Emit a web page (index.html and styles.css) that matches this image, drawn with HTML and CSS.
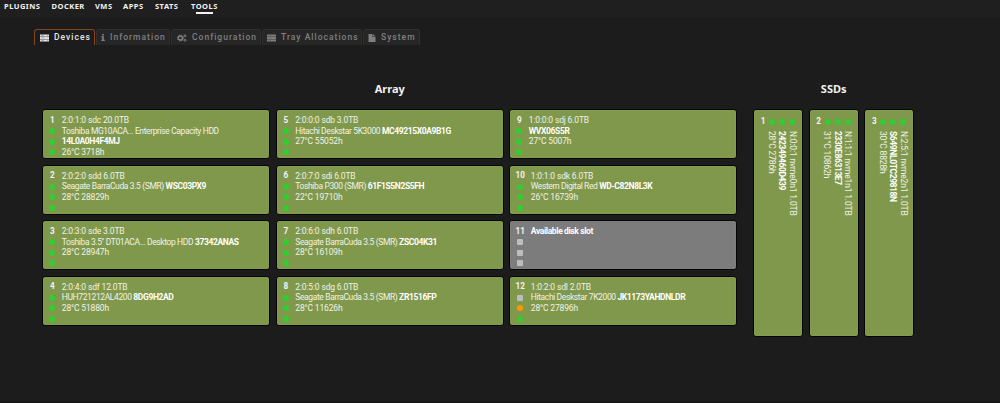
FILE: index.html
```html
<!DOCTYPE html>
<html lang="en">
<head>
<meta charset="utf-8">
<title>Disk Location</title>
<link rel="stylesheet" href="styles.css">
</head>
<body>
<svg class="defs" aria-hidden="true">
  <symbol id="server" viewBox="0 0 9 8"><path d="M0 .4h9v2H0zM0 3h9v2H0zM0 5.6h9v2H0z" fill="currentColor"/><path d="M0 2.7h9M0 5.3h9" stroke="currentColor" stroke-opacity=".5" stroke-width=".6"/><path d="M1 1.4h3M1 4h4M1 6.6h3M7.2 1.4h1M7.2 4h1M7.2 6.6h1" stroke="#555" stroke-width=".4"/></symbol>
  <symbol id="info" viewBox="0 0 4 8"><path d="M1 0h2v1.7H1zM0 2.7h3v4h1V8H0V6.7h1V4H0z" fill="currentColor"/></symbol>
  <symbol id="gears" viewBox="0 0 10 8"><circle cx="3.4" cy="4" r="2.1" fill="none" stroke="currentColor" stroke-width="1.5"/><circle cx="3.4" cy="4" r="3" fill="none" stroke="currentColor" stroke-width="1" stroke-dasharray="1.2 1.156"/><circle cx="8" cy="1.8" r="1" fill="none" stroke="currentColor"/><circle cx="8" cy="6.2" r="1" fill="none" stroke="currentColor"/></symbol>
  <symbol id="file" viewBox="0 0 7 8"><path d="M0 0h4v3h3v5H0zM4.6 0L7 2.4H4.6z" fill="currentColor"/></symbol>
</svg>
<nav class="menu"><a class="m1">PLUGINS</a><a class="m2">DOCKER</a><a class="m3">VMS</a><a class="m4">APPS</a><a class="m5">STATS</a><a class="m6 current">TOOLS</a></nav>
<div class="tabs">
  <div class="tab t1 active"><svg class="i-server"><use href="#server"/></svg><span>Devices</span></div>
  <div class="tab t2"><svg class="i-info"><use href="#info"/></svg><span>Information</span></div>
  <div class="tab t3"><svg class="i-gears"><use href="#gears"/></svg><span>Configuration</span></div>
  <div class="tab t4"><svg class="i-server"><use href="#server"/></svg><span>Tray Allocations</span></div>
  <div class="tab t5"><svg class="i-file"><use href="#file"/></svg><span>System</span></div>
</div>
<main class="groups">
  <section class="array">
    <h2>Array</h2>
    <div class="grid">
      <div class="disk"><div class="leds"><b>1</b><i></i><i></i><i></i></div><div class="info"><p>2:0:1:0 sdc 20.0TB</p><p class="model">Toshiba MG10ACA... Enterprise Capacity HDD</p><p class="model"><b>14L0A0H4F4MJ</b></p><p>26°C 3718h</p></div></div>
      <div class="disk"><div class="leds"><b>2</b><i></i><i></i><i></i></div><div class="info"><p>2:0:2:0 sdd 6.0TB</p><p class="model">Seagate BarraCuda 3.5 (SMR) <b>WSC03PX9</b></p><p>28°C 28829h</p></div></div>
      <div class="disk"><div class="leds"><b>3</b><i></i><i></i><i></i></div><div class="info"><p>2:0:3:0 sde 3.0TB</p><p class="model">Toshiba 3.5" DT01ACA... Desktop HDD <b>37342ANAS</b></p><p>28°C 28947h</p></div></div>
      <div class="disk"><div class="leds"><b>4</b><i></i><i></i><i></i></div><div class="info"><p>2:0:4:0 sdf 12.0TB</p><p class="model">HUH721212AL4200 <b>8DG9H2AD</b></p><p>28°C 51880h</p></div></div>
      <div class="disk"><div class="leds"><b>5</b><i></i><i></i><i></i></div><div class="info"><p>2:0:0:0 sdb 3.0TB</p><p class="model">Hitachi Deskstar 5K3000 <b>MC49215X0A9B1G</b></p><p>27°C 55052h</p></div></div>
      <div class="disk"><div class="leds"><b>6</b><i></i><i></i><i></i></div><div class="info"><p>2:0:7:0 sdi 6.0TB</p><p class="model">Toshiba P300 (SMR) <b>61F1S5N2S5FH</b></p><p>22°C 19710h</p></div></div>
      <div class="disk"><div class="leds"><b>7</b><i></i><i></i><i></i></div><div class="info"><p>2:0:6:0 sdh 6.0TB</p><p class="model">Seagate BarraCuda 3.5 (SMR) <b>ZSC04K31</b></p><p>28°C 16109h</p></div></div>
      <div class="disk"><div class="leds"><b>8</b><i></i><i></i><i></i></div><div class="info"><p>2:0:5:0 sdg 6.0TB</p><p class="model">Seagate BarraCuda 3.5 (SMR) <b>ZR1516FP</b></p><p>28°C 11626h</p></div></div>
      <div class="disk"><div class="leds"><b>9</b><i></i><i></i><i></i></div><div class="info"><p>1:0:0:0 sdj 6.0TB</p><p class="model"><b>WVX06S5R</b></p><p>27°C 5007h</p></div></div>
      <div class="disk wide"><div class="leds"><b>10</b><i></i><i></i><i></i></div><div class="info"><p>1:0:1:0 sdk 6.0TB</p><p class="model">Western Digital Red <b>WD-C82N8L3K</b></p><p>26°C 16739h</p></div></div>
      <div class="disk wide empty"><div class="leds"><b>11</b><i class="off"></i><i class="off"></i><i class="off"></i></div><div class="info"><p class="model"><b>Available disk slot</b></p></div></div>
      <div class="disk wide"><div class="leds"><b>12</b><i class="off"></i><i class="warn"></i><i></i></div><div class="info"><p>1:0:2:0 sdl 2.0TB</p><p class="model">Hitachi Deskstar 7K2000 <b>JK1173YAHDNLDR</b></p><p>28°C 27896h</p></div></div>
    </div>
  </section>
  <section class="ssds">
    <h2>SSDs</h2>
    <div class="row">
      <div class="ssd"><div class="leds"><b>1</b><i></i><i></i><i></i></div><div class="info"><p>N:0:0:1 nvme0n1 1.0TB</p><p class="model"><b>242349460D439</b></p><p>28°C 2786h</p></div></div>
      <div class="ssd"><div class="leds"><b>2</b><i></i><i></i><i></i></div><div class="info"><p>N:1:1:1 nvme1n1 1.0TB</p><p class="model"><b>2330E86313E7</b></p><p>31°C 10862h</p></div></div>
      <div class="ssd"><div class="leds"><b>3</b><i></i><i></i><i></i></div><div class="info"><p>N:2:5:1 nvme2n1 1.0TB</p><p class="model"><b>S649NL0TC29818N</b></p><p>30°C 8828h</p></div></div>
    </div>
  </section>
</main>
</body>
</html>
```
FILE: styles.css
```css
* { box-sizing: border-box; }
body { margin: 0; height: 403px; overflow: hidden; background: #1c1c1c; color: #f2f2f2; font-family: Roboto, "Noto Sans", sans-serif; border-bottom: 1px solid #111; }
p, h2 { margin: 0; }
.defs { position: absolute; width: 0; height: 0; }
.menu { height: 17px; display: flex; padding-left: 4px; background: #1f1f1f; font: bold 7.5px/13px "Noto Sans", sans-serif; letter-spacing: .48px; white-space: nowrap; }
.menu a { height: 14px; }
.m1 { width: 47.5px; }
.m2 { width: 43.5px; }
.m3 { width: 28px; }
.m4 { width: 32px; }
.m5 { width: 36px; }
.m6 { width: 27px; }
.current::after { content: ""; display: block; width: 17px; height: 1.5px; margin: -1px auto 0; background: #f2f2f2; }
.tabs { display: flex; gap: 1px; padding: 12px 0 0 34px; }
.tab { height: 16px; display: flex; align-items: center; gap: 5px; padding-left: 5px; border: 1px solid #303030; border-bottom: 0; border-radius: 3px 3px 0 0; background: #262626; color: #808080; font: 500 8.5px/15px Roboto, sans-serif; letter-spacing: 1.02px; white-space: nowrap; }
.tab.active { background: #1c1c1c; border-color: #84461d; color: #e6e6e6; }
.t1 { width: 61px; }
.t2 { width: 74px; padding-left: 4px; }
.t3 { width: 90px; }
.t4 { width: 100px; padding-left: 4px; }
.t5 { width: 57px; padding-left: 4px; }
.i-server { width: 9px; height: 8px; }
.i-info { width: 4px; height: 7px; }
.i-gears { width: 10px; height: 8px; }
.i-file { width: 8px; height: 8px; }
.groups { display: flex; gap: 15.8px; padding: 34px 0 0 42.3px; }
h2 { height: 30px; text-align: center; font: bold 11px/19px "Noto Sans", sans-serif; color: #f2f2f2; }
.grid { display: grid; grid-template-rows: repeat(4, 50px); grid-auto-columns: 228px; grid-auto-flow: column; gap: 5.5px; }
.disk, .ssd { border: 1.5px solid #050505; border-radius: 3px; background: #80984b; box-shadow: inset 0 0 1px #9cbb5a; }
.disk { display: flex; padding: 5px 0 0 4.5px; }
.disk.empty { background: #7c7c7c; box-shadow: inset 0 0 1px #999; }
.leds { display: grid; justify-items: center; align-items: center; }
.disk .leds { width: 9px; height: 42px; grid-template-rows: repeat(4, 10.5px); }
.disk.wide .leds { width: 11px; }
.leds b { font-size: 8.2px; line-height: 11px; }
.leds i { width: 6px; height: 6px; border-radius: 50%; background: #32cd32; }
.disk .leds i { margin-top: 1px; }
.leds .off { border-radius: 1px; background: #bdbdbd; }
.leds .warn { background: #ff9800; }
.info { font-size: 8.5px; line-height: 10.5px; letter-spacing: -.16px; white-space: nowrap; color: #f0f2e8; }
.info .model { letter-spacing: -.38px; }
.info b { color: #fff; }
.disk .info { padding-left: 5px; }
.row { display: flex; gap: 5.6px; }
.ssd { width: 50px; height: 228px; padding: 6px 0 0 5px; }
.ssd .leds { display: grid; grid-template-columns: 8px 10px 10px 10px; height: 10px; width: 38px; }
.ssd .info { writing-mode: vertical-rl; margin-left: 7px; padding-top: 5px; }
```
